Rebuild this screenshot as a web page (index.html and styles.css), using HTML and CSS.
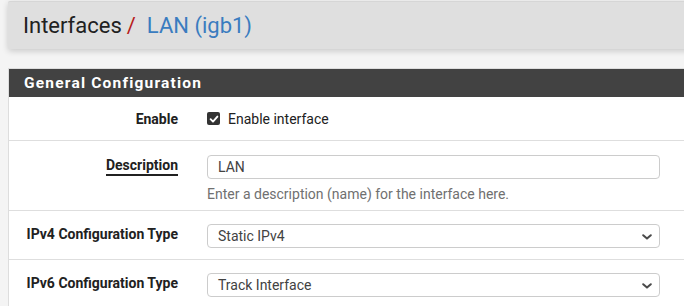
FILE: index.html
```html
<!DOCTYPE html>
<html lang="en">
<head>
  <meta charset="UTF-8">
  <title>Interfaces / LAN (igb1)</title>
  <link rel="stylesheet" href="styles.css">
</head>
<body>
  <!-- Breadcrumb header -->
  <div class="page-header">
    <ol class="breadcrumb">
      <li>Interfaces</li>
      <li class="active">LAN (igb1)</li>
    </ol>
  </div>

  <!-- General configuration panel -->
  <div class="panel">
    <div class="panel-heading">
      <h2>General Configuration</h2>
    </div>
    <div class="panel-body">
      <div class="form-row row-enable">
        <label class="form-label">Enable</label>
        <div class="form-field">
          <label class="check">
            <span class="checkbox">
              <svg viewBox="0 0 12 12" width="12" height="12"><path d="M2.6 6.2 L5 8.6 L9.4 3.6" fill="none" stroke="#fff" stroke-width="1.9" stroke-linecap="round" stroke-linejoin="round"/></svg>
            </span>
            Enable interface
          </label>
        </div>
      </div>

      <div class="form-row row-desc">
        <label class="form-label"><span class="required">Description</span></label>
        <div class="form-field">
          <input class="form-control" type="text" value="LAN">
          <span class="help-block">Enter a description (name) for the interface here.</span>
        </div>
      </div>

      <div class="form-row row-select">
        <label class="form-label">IPv4 Configuration Type</label>
        <div class="form-field">
          <div class="select">
            <span>Static IPv4</span>
            <svg class="caret" viewBox="0 0 10 6" width="10" height="6"><path d="M1.2 1.2 L5 4.6 L8.8 1.2" fill="none" stroke="#4a4a4a" stroke-width="2" stroke-linecap="round" stroke-linejoin="round"/></svg>
          </div>
        </div>
      </div>

      <div class="form-row row-select">
        <label class="form-label">IPv6 Configuration Type</label>
        <div class="form-field">
          <div class="select">
            <span>Track Interface</span>
            <svg class="caret" viewBox="0 0 10 6" width="10" height="6"><path d="M1.2 1.2 L5 4.6 L8.8 1.2" fill="none" stroke="#4a4a4a" stroke-width="2" stroke-linecap="round" stroke-linejoin="round"/></svg>
          </div>
        </div>
      </div>
    </div>
  </div>
</body>
</html>
```

FILE: styles.css
```css
/* Reset */
* {
  margin: 0;
  padding: 0;
  box-sizing: border-box;
}

body {
  font-family: Roboto, "Liberation Sans", sans-serif;
  font-size: 14px;
  color: #212121;
  background-color: #f4f4f4;
  padding: 1px 0 0 8px;
  overflow: hidden;
}

/* Breadcrumb header */
.page-header {
  background-color: #dfdfdf;
  border-top: 1px solid #d6d6d6;
  height: 48px;
  margin-right: -20px;
  padding: 0 15px;
  display: flex;
  align-items: center;
  box-shadow: 0 2px 6px rgba(0, 0, 0, 0.18);
  border-radius: 2px 0 0 2px;
}

.breadcrumb {
  list-style: none;
  display: flex;
  font-size: 22px;
  color: #212121;
  margin-top: -1px;
}

.breadcrumb li + li::before {
  content: "/";
  color: #b71c1c;
  padding: 0 11px 0 5px;
}

.breadcrumb .active {
  color: #3a7cbf;
}

/* Panel */
.panel {
  margin-top: 19px;
  margin-right: -20px;
  background-color: #fff;
  border-top: 1px solid #ddd;
  border-left: 1px solid #ddd;
}

.panel-heading {
  background-color: #424242;
  height: 28px;
  padding: 0 15px;
  display: flex;
  align-items: center;
}

.panel-heading h2 {
  color: #fff;
  font-size: 15.5px;
  font-weight: bold;
  letter-spacing: 1.2px;
}

/* Form rows */
.form-row {
  display: flex;
  border-bottom: 1px solid #dedede;
}

.form-label {
  width: 169px;
  flex-shrink: 0;
  text-align: right;
  font-weight: bold;
  font-size: 14px;
}

.form-field {
  margin-left: 29px;
  width: 453px;
  display: flex;
  flex-direction: column;
}

.row-enable {
  height: 44px;
  align-items: center;
}

.row-desc {
  height: 70px;
  padding-top: 14px;
}

.row-desc .form-label {
  padding-top: 2px;
}

.row-select {
  height: 49px;
  padding-top: 13px;
}

.row-select .form-label {
  padding-top: 2px;
}

.required {
  border-bottom: 2px solid #212121;
  padding-bottom: 1px;
}

/* Checkbox */
.check {
  display: flex;
  align-items: center;
  font-size: 14px;
}

.checkbox {
  width: 13px;
  height: 13px;
  border-radius: 2px;
  background-color: #333;
  display: inline-flex;
  align-items: center;
  justify-content: center;
  margin-right: 8px;
}

/* Inputs */
.form-control,
.select {
  height: 24px;
  width: 100%;
  border: 1px solid #ccc;
  border-radius: 4px;
  background-color: #fff;
  font-family: inherit;
  font-size: 14px;
  color: #424242;
  padding: 0 10px;
}

.help-block {
  margin-top: 7px;
  font-size: 14px;
  color: #707070;
}

.select {
  display: flex;
  align-items: center;
  justify-content: space-between;
  padding-right: 7px;
}

.caret {
  margin-top: 1px;
}
```
